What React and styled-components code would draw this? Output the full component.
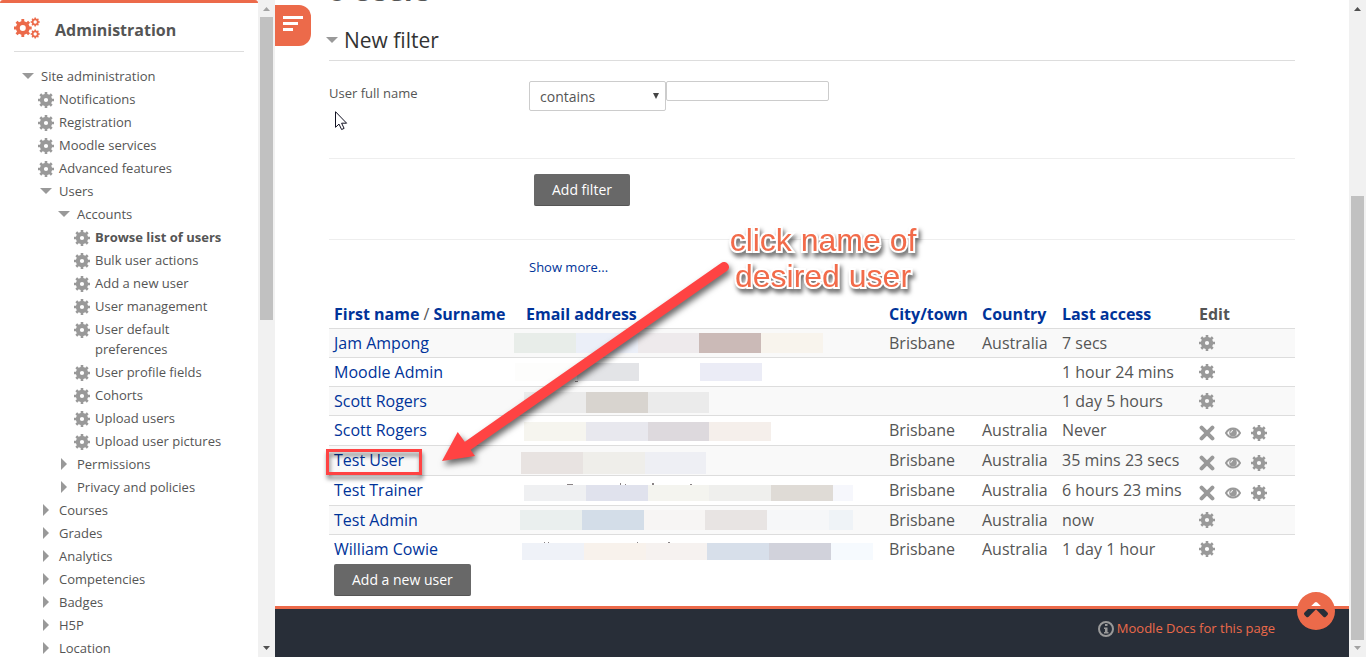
import React from 'react';
import styled, { createGlobalStyle } from 'styled-components';

const ORANGE = '#ec6a4a';
const RED = '#ff4343';
const GREY = '#999';

const GlobalStyle = createGlobalStyle`
  * { box-sizing: border-box; }
  body {
    margin: 0;
    background: #fff;
    color: #555;
    font-family: "Open Sans", "Noto Sans", sans-serif;
    font-size: 13px;
    line-height: 20px;
  }
  a { color: #039; text-decoration: none; }
`;

const Shell = styled.div`
  display: grid;
  grid-template-columns: 258px 17px minmax(0, 1fr) 17px;
  height: 100vh;
  overflow: hidden;
`;

/* ---------- icons ---------- */

function gearPath(cx, cy, outer, body, hole, teeth = 8) {
  const pts = [];
  const step = (Math.PI * 2) / teeth;
  for (let i = 0; i < teeth; i += 1) {
    const a = i * step - Math.PI / 2;
    [
      [body, -0.27],
      [outer, -0.2],
      [outer, 0.2],
      [body, 0.27],
    ].forEach(([r, k]) => {
      const t = a + step * k;
      pts.push(`${(cx + r * Math.cos(t)).toFixed(2)} ${(cy + r * Math.sin(t)).toFixed(2)}`);
    });
  }
  return `M${pts.join('L')}Z M${cx - hole} ${cy}a${hole} ${hole} 0 1 0 ${hole * 2} 0a${hole} ${hole} 0 1 0 ${-hole * 2} 0Z`;
}

const Glyph = styled.svg`
  display: block;
  flex: none;
  fill: ${(p) => p.$color || GREY};
`;

const GEAR = gearPath(8, 8, 8.2, 6.2, 2.1);

const GearIcon = () => (
  <Glyph width="16" height="16" viewBox="0 0 16 16" aria-hidden="true">
    <path d={GEAR} fillRule="evenodd" />
  </Glyph>
);

const CogsIcon = () => (
  <Glyph $color={ORANGE} width="26" height="22" viewBox="0 0 26 22" aria-hidden="true">
    <path d={gearPath(8.8, 11, 9, 6.9, 3)} fillRule="evenodd" />
    <path d={gearPath(21.2, 5, 4.6, 3.6, 1.7)} fillRule="evenodd" />
    <path d={gearPath(21.2, 17, 4.6, 3.6, 1.7)} fillRule="evenodd" />
  </Glyph>
);

const OpenIcon = () => (
  <Glyph width="16" height="16" viewBox="0 0 16 16" aria-hidden="true">
    <path d="M2 5h12L8 11Z" />
  </Glyph>
);

const ClosedIcon = () => (
  <Glyph width="16" height="16" viewBox="0 0 16 16" aria-hidden="true">
    <path d="M5 2v12l6-6Z" />
  </Glyph>
);

const DeleteIcon = () => (
  <Glyph width="16" height="16" viewBox="0 0 16 16" aria-hidden="true">
    <path d="M2.6 2.6 13.4 13.4M13.4 2.6 2.6 13.4" stroke={GREY} strokeWidth="4" strokeLinecap="round" />
  </Glyph>
);

const EyeIcon = () => (
  <Glyph width="16" height="16" viewBox="0 0 16 16" aria-hidden="true">
    <path d="M1 8C2.700 5 5.200 3.500 8 3.500S13.300 5 15 8c-1.700 3-4.200 4.500-7 4.500S2.700 11 1 8Z" fill="none" stroke={GREY} strokeWidth="2" />
    <circle cx="8" cy="7.800" r="3.800" />
    <path d="M8 5.500A2.300 2.300 0 0 0 5.800 7.800" fill="none" stroke="#fff" strokeWidth="1" />
  </Glyph>
);

const InfoIcon = () => (
  <Glyph width="16" height="16" viewBox="0 0 16 16" aria-hidden="true">
    <circle cx="8" cy="8" r="7" fill="none" stroke={GREY} strokeWidth="2" />
    <path d="M7 3h2.500v2H7ZM6 6.500h3.500V11h1v1.500H6V11h1V8H6Z" />
  </Glyph>
);

/* ---------- scroll bars ---------- */

const Track = styled.div`
  display: flex;
  flex-direction: column;
  align-items: center;
  background: #f1f1f1;
`;

const TrackEnd = styled.svg`
  flex: none;
  width: 17px;
  height: 17px;
  fill: ${(p) => (p.$active ? '#505050' : '#a3a3a3')};
`;

const Space = styled.div`
  flex: ${(p) => p.$share} 1 0;
`;

const Thumb = styled(Space)`
  width: 13px;
  background: #c1c1c1;
`;

const ScrollBar = ({ before, thumb, after }) => (
  <Track aria-hidden="true">
    <TrackEnd $active={before > 0} viewBox="0 0 17 17"><path d="M5 11h7L8.500 7Z" /></TrackEnd>
    <Space $share={before} />
    <Thumb $share={thumb} />
    <Space $share={after} />
    <TrackEnd $active={after > 0} viewBox="0 0 17 17"><path d="M5 6h7L8.500 10Z" /></TrackEnd>
  </Track>
);

/* ---------- side bar ---------- */

const Sidebar = styled.aside`
  overflow: hidden;
  padding: 0 14px;
  border-top: 3px solid ${ORANGE};
  border-radius: 3px 3px 0 0;
`;

const BlockTitle = styled.header`
  display: flex;
  align-items: flex-start;
  gap: 15px;
  height: 49px;
  padding-top: 14px;
  border-bottom: 1px solid #ddd;
`;

const BlockHeading = styled.h2`
  margin: 0;
  font-size: 16px;
  font-weight: 700;
  line-height: 26px;
`;

const Tree = styled.ul`
  list-style: none;
  margin: 0;
  padding: ${(p) => (p.$root ? '14px 0 0 6px' : '0 0 0 18px')};
`;

const TreeRow = styled.div`
  display: flex;
  gap: 5px;
  padding-bottom: 3px;

  svg { margin-top: ${(p) => (p.$leaf ? '3px' : '2px')}; }
`;

const TreeLink = styled.a`
  color: #555;
  font-weight: ${(p) => (p.$current ? 700 : 400)};
`;

const TREE = [
  {
    label: 'Site administration',
    children: [
      { label: 'Notifications', leaf: true },
      { label: 'Registration', leaf: true },
      { label: 'Moodle services', leaf: true },
      { label: 'Advanced features', leaf: true },
      {
        label: 'Users',
        children: [
          {
            label: 'Accounts',
            children: [
              { label: 'Browse list of users', leaf: true, current: true },
              { label: 'Bulk user actions', leaf: true },
              { label: 'Add a new user', leaf: true },
              { label: 'User management', leaf: true },
              { label: 'User default preferences', leaf: true },
              { label: 'User profile fields', leaf: true },
              { label: 'Cohorts', leaf: true },
              { label: 'Upload users', leaf: true },
              { label: 'Upload user pictures', leaf: true },
            ],
          },
          { label: 'Permissions' },
          { label: 'Privacy and policies' },
        ],
      },
      { label: 'Courses' },
      { label: 'Grades' },
      { label: 'Analytics' },
      { label: 'Competencies' },
      { label: 'Badges' },
      { label: 'H5P' },
      { label: 'Location' },
    ],
  },
];

const TreeLevel = ({ items, root }) => (
  <Tree $root={root}>
    {items.map((item) => (
      <li key={item.label}>
        <TreeRow $leaf={item.leaf}>
          {item.leaf ? <GearIcon /> : item.children ? <OpenIcon /> : <ClosedIcon />}
          <TreeLink href="#" $current={item.current}>{item.label}</TreeLink>
        </TreeRow>
        {item.children && <TreeLevel items={item.children} />}
      </li>
    ))}
  </Tree>
);

/* ---------- main ---------- */

const Main = styled.main`
  position: relative;
  display: flex;
  flex-direction: column;
  overflow: hidden;
`;

const MenuTab = styled.button`
  position: absolute;
  top: 5px;
  left: 0;
  width: 36px;
  height: 41px;
  padding: 0 0 4px 8px;
  border: 0;
  border-radius: 0 12px 12px 0;
  background: ${ORANGE};
`;

const Content = styled.div`
  padding: 0 54px 10px;
`;

/* The page is scrolled down, so only the foot of the heading shows. */
const PageHeading = styled.h1`
  margin: -28px 0 12px;
  font-size: 28px;
  line-height: 36px;
  font-weight: 700;
`;

const FilterTitle = styled.h3`
  display: flex;
  align-items: center;
  gap: 4px;
  margin: 0 0 0 -5px;
  color: #333;
  font-size: 21px;
  font-weight: 400;
  line-height: 40px;
`;

const FilterBody = styled.div`
  border-top: 1px solid #ddd;
  border-bottom: 1px solid #eee;
  padding: 20px 0 47px;
  display: grid;
  grid-template-columns: 200px 1fr;
`;

const FieldLabel = styled.label`
  line-height: 24px;
`;

const Fields = styled.div`
  display: flex;
  align-items: flex-start;
`;

const SelectBox = styled.div`
  position: relative;
  width: 137px;

  svg {
    position: absolute;
    right: 7px;
    top: 11px;
    fill: #444;
    pointer-events: none;
  }
`;

const Select = styled.select`
  appearance: none;
  display: block;
  width: 100%;
  height: 30px;
  padding: 0 10px;
  border: 1px solid #ccc;
  border-radius: 2px;
  background: #fff;
  color: #555;
  font: 14px "Open Sans", sans-serif;
`;

const TextInput = styled.input`
  width: 163px;
  height: 20px;
  padding: 0 4px;
  border: 1px solid #ccc;
  border-radius: 2px;
  color: #555;
  font: 13px "Open Sans", sans-serif;
`;

const Offset = styled.div`
  padding: 15px 0 33px 205px;
  border-bottom: 1px solid #eee;
`;

const Button = styled.button`
  display: block;
  height: 32px;
  padding: 0 18px;
  border: 0;
  border-bottom: 1px solid #555;
  border-radius: 2px;
  background: #686868;
  color: #fff;
  font: 14px "Open Sans", sans-serif;
`;

const MoreRow = styled.div`
  padding: 17px 0 23px 200px;
`;

const UserTable = styled.table`
  width: 100%;
  table-layout: fixed;
  border-collapse: separate;
  border-spacing: 0;
  font-size: 16px;
`;

const Col = styled.col`
  width: ${(p) => p.$width || 'auto'};
`;

const HeadCell = styled.th`
  padding: 4px 0 4px 5px;
  text-align: left;
  font-weight: 700;
  white-space: nowrap;
`;

const Slash = styled.span`
  font-weight: 400;
`;

const Row = styled.tr`
  &:nth-child(odd) { background: #f9f9f9; }
`;

const Cell = styled.td`
  position: relative;
  padding: 4px 0 4px 5px;
  border-top: 1px solid #ddd;
  vertical-align: top;
  white-space: nowrap;
`;

const EmailCell = styled(Cell)`
  padding: 0;
`;

const Redaction = styled.div`
  position: absolute;
  display: flex;
  left: ${(p) => p.$left}px;
  top: ${(p) => p.$top}px;
  height: ${(p) => p.$height}px;
`;

const Block = styled.span`
  width: ${(p) => p.$width || 62}px;
  background: ${(p) => p.$color};
`;

const Traces = styled.svg`
  position: absolute;
  left: 0;
  top: 0;
  overflow: visible;
  fill: #8a8486;
`;

const Actions = styled.div`
  display: flex;
  align-items: ${(p) => (p.$full ? 'flex-end' : 'center')};
  gap: 10px;
  height: ${(p) => (p.$full ? 21 : 20)}px;
`;

const IconButton = styled.button`
  padding: 0;
  border: 0;
  background: none;
`;

const AddUser = styled.div`
  padding: 1px 0 0 5px;
`;

const USERS = [
  { name: 'Jam Ampong', local: true, seen: '7 secs', left: -7, top: 4, height: 20, blocks: ['#e8ede9', '#ebeff8', '#eeeaec', '#cbbab7', '#f8f4ed'] },
  { name: 'Moodle Admin', seen: '1 hour 24 mins', left: -6, top: 5, height: 18, blocks: ['#fdfdfc', '#e3e4e7', 'transparent', '#ebecf6'], traces: 'M60 18h3v1h-3Z' },
  { name: 'Scott Rogers', seen: '1 day 5 hours', left: 3, top: 5, height: 21, blocks: ['#ebebeb', '#d8d4cf', '#ebebeb'] },
  { name: 'Scott Rogers', local: true, full: true, seen: 'Never', left: 3, top: 6, height: 19, blocks: ['#f6f5ef', '#e8e8ee', '#ddd9dd', '#f5efeb'] },
  { name: 'Test User', local: true, full: true, marked: true, seen: '35 mins 23 secs', left: 0, top: 6, height: 22, blocks: ['#e8e3e1', '#efeeea', '#eeeff4'] },
  { name: 'Test Trainer', local: true, full: true, seen: '6 hours 23 mins', left: 3, top: 9, height: 16, blocks: ['#eff0f2', '#e0e2ed', '#f4f4ef', '#efefed', '#dfdbd6'], last: ['#f6f7fc', 20], traces: 'M43-1h6v1h-6ZM96-2h1v2h-1ZM101-1h1v1h-1ZM128-2h2v2h-2ZM166-1h2v1h-2Z' },
  { name: 'Test Admin', local: true, seen: 'now', left: -1, top: 4, height: 20, blocks: ['#eaefee', '#d3dde8', '#f7f5f4', '#e8e4e3', '#f6f7f9'], last: ['#eff3f7', 24] },
  { name: 'William Cowie', local: true, seen: '1 day 1 hour', left: 1, top: 8, height: 17, blocks: ['#eff2f8', '#f8f2ec', '#f6f2f0', '#d7dfea', '#d1d2db'], last: ['#f6fafe', 42], traces: 'M22-1h1v1h-1ZM26-1h1v1h-1ZM115-1h1v1h-1ZM146-1h2v1h-2Z' },
];

/* ---------- footer ---------- */

const Footer = styled.footer`
  position: relative;
  flex: 1;
  display: flex;
  justify-content: flex-end;
  align-items: flex-start;
  min-height: 51px;
  padding: 9px 74px 0 0;
  border-top: 3px solid ${ORANGE};
  background: #282e38;
`;

const DocsLink = styled.a`
  display: flex;
  align-items: center;
  gap: 3px;
  color: ${ORANGE};

  svg { margin-top: 2px; }
`;

const TopLink = styled.a`
  position: absolute;
  top: -17px;
  right: 14px;
`;

/* ---------- annotations ---------- */

const Marker = styled.span`
  position: absolute;
  left: -3px;
  top: 3px;
  width: 96px;
  height: 26px;
  border: 3px solid ${RED};
  filter: drop-shadow(1px 4px 2px rgba(0, 0, 0, 0.5));
  pointer-events: none;
  z-index: 1;
`;

const Arrow = styled.svg`
  position: absolute;
  left: 155px;
  top: 250px;
  filter: drop-shadow(2px 4px 3px rgba(0, 0, 0, 0.6));
  pointer-events: none;
`;

const Callout = styled.p`
  position: absolute;
  left: 448px;
  top: 222px;
  margin: 0;
  width: 200px;
  color: #f26b4a;
  font: 32px/36px "Liberation Sans", Arial, sans-serif;
  text-align: center;
  -webkit-text-stroke: 4px #fff;
  paint-order: stroke fill;
  filter: drop-shadow(2px 4px 2px rgba(0, 0, 0, 0.55));
`;

const Pointer = styled.svg`
  position: absolute;
  left: 60px;
  top: 111px;
  pointer-events: none;
`;

export default function App() {
  return (
    <Shell>
      <GlobalStyle />
      <Sidebar>
        <BlockTitle>
          <CogsIcon />
          <BlockHeading>Administration</BlockHeading>
        </BlockTitle>
        <nav aria-label="Administration">
          <TreeLevel items={TREE} root />
        </nav>
      </Sidebar>
      <ScrollBar before={0} thumb={303} after={320} />

      <Main>
        <Content>
          <PageHeading>8 Users</PageHeading>
          <FilterTitle><OpenIcon />New filter</FilterTitle>
          <FilterBody>
            <FieldLabel htmlFor="realname">User full name</FieldLabel>
            <Fields>
              <SelectBox>
                <Select aria-label="User full name operator" defaultValue="contains">
                  <option>contains</option>
                  <option>is equal to</option>
                </Select>
                <svg width="6" height="8" viewBox="0 0 6 8" aria-hidden="true"><path d="M0 1h6L3 7Z" /></svg>
              </SelectBox>
              <TextInput id="realname" type="text" />
            </Fields>
          </FilterBody>
          <Offset>
            <Button type="button">Add filter</Button>
          </Offset>
          <MoreRow><a href="#">Show more...</a></MoreRow>

          <UserTable>
            <colgroup>
              <Col $width="192px" />
              <Col />
              <Col $width="93px" />
              <Col $width="80px" />
              <Col $width="137px" />
              <Col $width="101px" />
            </colgroup>
            <thead>
              <tr>
                <HeadCell><a href="#">First name</a><Slash> / </Slash><a href="#">Surname</a></HeadCell>
                <HeadCell><a href="#">Email address</a></HeadCell>
                <HeadCell><a href="#">City/town</a></HeadCell>
                <HeadCell><a href="#">Country</a></HeadCell>
                <HeadCell><a href="#">Last access</a></HeadCell>
                <HeadCell>Edit</HeadCell>
              </tr>
            </thead>
            <tbody>
              {USERS.map((u, i) => (
                <Row key={i}>
                  <Cell>
                    <a href="#">{u.name}</a>
                    {u.marked && <Marker />}
                  </Cell>
                  <EmailCell>
                    <Redaction $left={u.left} $top={u.top} $height={u.height}>
                      {u.blocks.map((c, n) => <Block key={n} $color={c} $width={n === 2 ? 61 : 62} />)}
                      {u.last && <Block $color={u.last[0]} $width={u.last[1]} />}
                      {u.traces && <Traces width="1" height="1" aria-hidden="true"><path d={u.traces} /></Traces>}
                    </Redaction>
                  </EmailCell>
                  <Cell>{u.local && 'Brisbane'}</Cell>
                  <Cell>{u.local && 'Australia'}</Cell>
                  <Cell>{u.seen}</Cell>
                  <Cell>
                    <Actions $full={u.full}>
                      {u.full && <IconButton type="button" aria-label="Delete"><DeleteIcon /></IconButton>}
                      {u.full && <IconButton type="button" aria-label="Suspend"><EyeIcon /></IconButton>}
                      <IconButton type="button" aria-label="Edit"><GearIcon /></IconButton>
                    </Actions>
                  </Cell>
                </Row>
              ))}
            </tbody>
          </UserTable>
          <AddUser>
            <Button type="button">Add a new user</Button>
          </AddUser>
        </Content>

        <Footer>
          <DocsLink href="#"><InfoIcon />Moodle Docs for this page</DocsLink>
          <TopLink href="#" aria-label="Back to top">
            <Glyph $color={ORANGE} width="38" height="38" viewBox="0 0 38 38">
              <path
                fillRule="evenodd"
                d="M19 0a19 19 0 1 1 0 38a19 19 0 1 1 0-38ZM17.800 10.500 7.500 20.600q-1.200 1.200 0 2.400l1.700 1.700q1.200 1.200 2.400 0L19 17.300l7.400 7.400q1.200 1.200 2.400 0l1.700-1.700q1.200-1.200 0-2.400L20.200 10.500q-1.200-1.200-2.400 0Z"
              />
            </Glyph>
          </TopLink>
        </Footer>

        <MenuTab type="button" aria-label="Toggle menu">
          <Glyph $color="#fff" width="20" height="19" viewBox="0 0 20 19">
            <path d="M0 2h20v3H0ZM0 8h15v3H0ZM0 14h10v3H0Z" />
          </Glyph>
        </MenuTab>
        <Pointer width="14" height="20" viewBox="0 0 14 20" aria-hidden="true">
          <path d="M.5.700v15.600l3.500-3.200 2.600 5.400 2.500-1.100-2.500-5.200h5Z" fill="#fff" stroke="#112" />
        </Pointer>
        <Arrow width="310" height="225" viewBox="0 0 310 225" aria-hidden="true">
          <path d="M294 17 36 197" stroke={RED} strokeWidth="10" strokeLinecap="round" />
          <path d="M12 211 27.700 182 45 206Z" fill={RED} />
        </Arrow>
        <Callout>click name of<br />desired user</Callout>
      </Main>
      <ScrollBar before={179} thumb={444} after={0} />
    </Shell>
  );
}
